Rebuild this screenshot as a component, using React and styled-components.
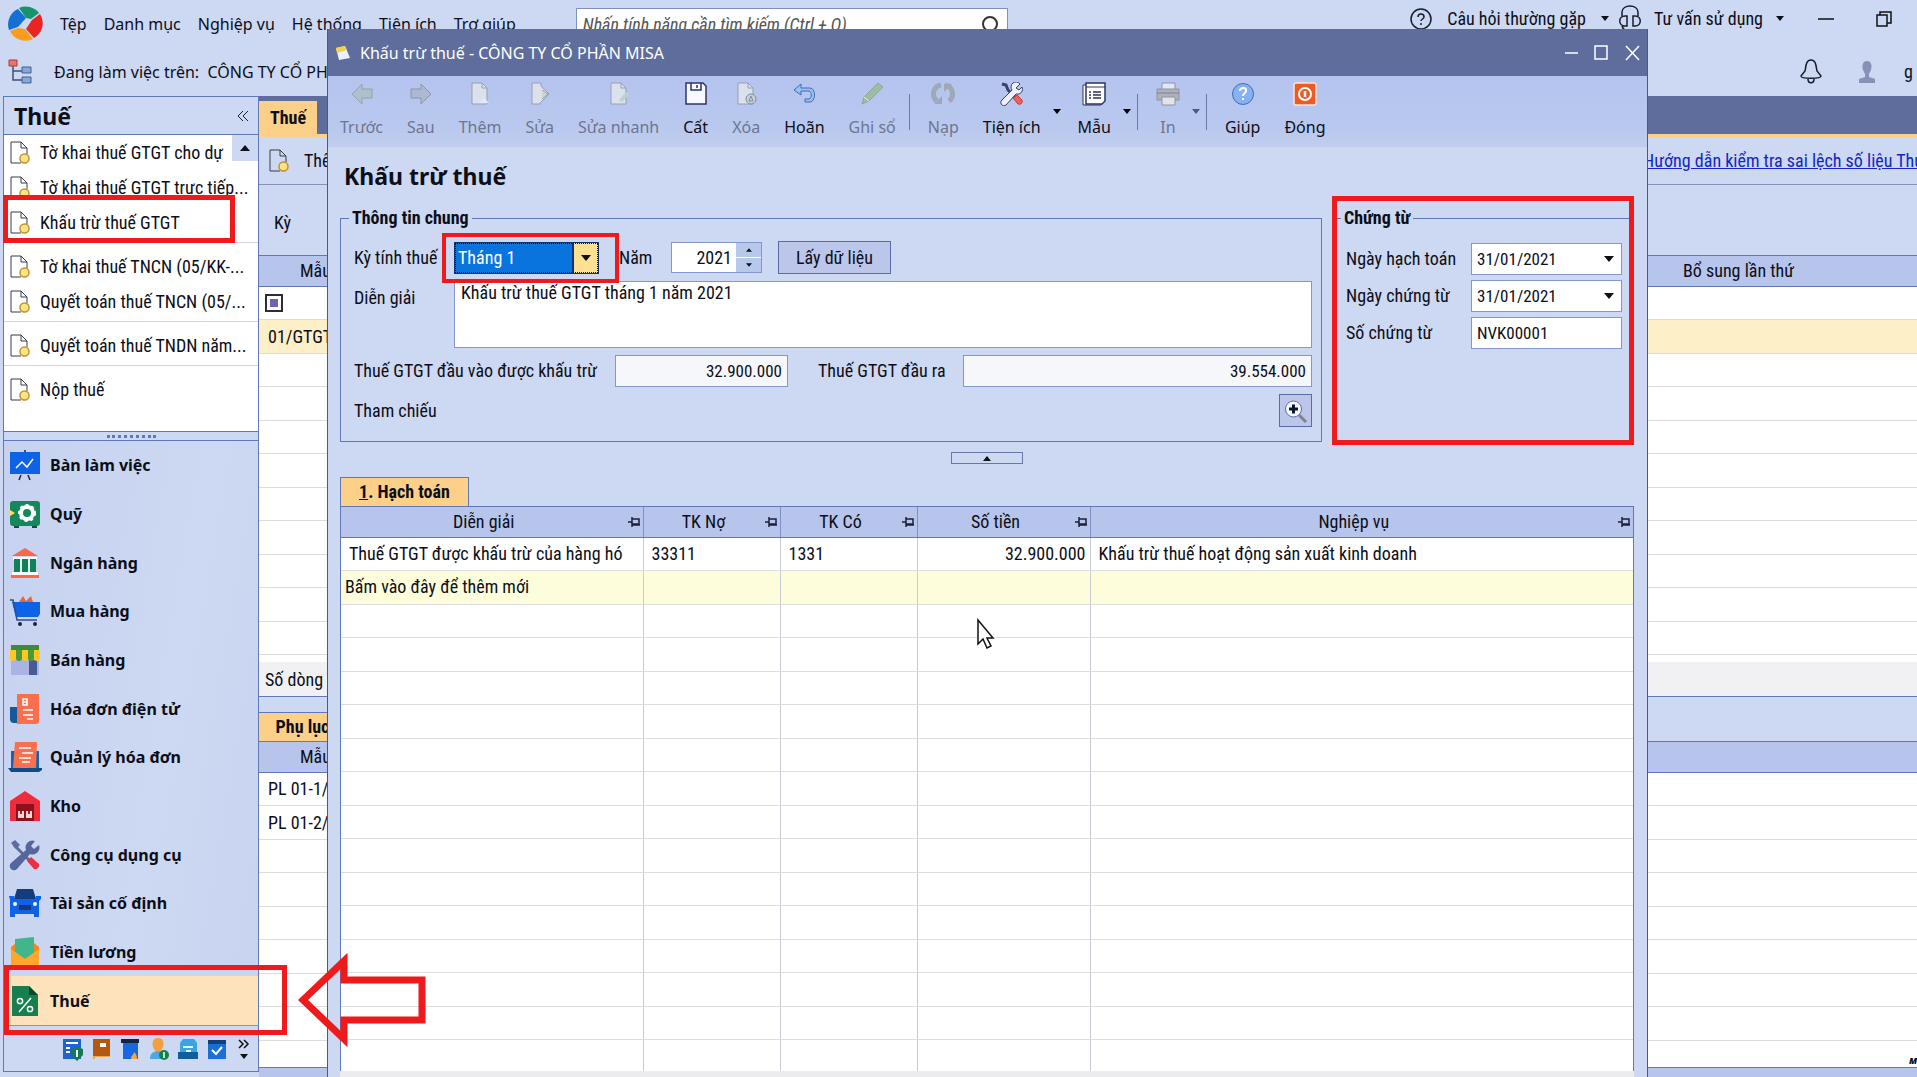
import React, { Component } from 'react';
import styled, { createGlobalStyle, css } from 'styled-components';

const ui = "'Noto Sans', 'Open Sans', sans-serif";
const narrow = "'Roboto Condensed', 'Roboto', 'Liberation Sans', sans-serif";

const pale = '#cdd8f2';
const head = '#b7c4eb';
const line = '#6178b8';
const slate = '#5e6d9b';
const red = '#ef1a1c';
const orange = '#fdd089';

const GlobalStyle = createGlobalStyle`
  * {
    box-sizing: border-box;
  }
  body {
    margin: 0;
    background: ${pale};
    color: #0c0e18;
    font: 18px/24px ${narrow};
  }
  button, input, select, textarea {
    margin: 0;
    padding: 0;
    border: 0;
    border-radius: 0;
    background: none;
    color: inherit;
    font: inherit;
  }
  svg {
    display: block;
    flex: none;
  }
`;

const Page = styled.div`
  position: relative;
  display: flex;
  flex-direction: column;
  height: 100vh;
  overflow: hidden;
`;

/* ---------- top of the main window ---------- */

const TopRow = styled.div`
  display: flex;
  align-items: flex-start;
  height: 48px;
  padding-left: 8px;
  white-space: nowrap;
`;

const Menu = styled.nav`
  display: flex;
  align-items: center;
  gap: 17px;
  height: 47px;
  font: 16px/24px ${ui};
  > button {
    white-space: nowrap;
  }
`;

const Search = styled.label`
  display: flex;
  align-items: center;
  width: 432px;
  height: 34px;
  margin: 8px 0 0 60px;
  padding: 0 8px 0 6px;
  border: 1px solid #7f8fc0;
  background: #fff;
  input {
    flex: 1;
    min-width: 0;
    outline: 0;
    font: italic 18px/24px ${narrow};
  }
  input::placeholder {
    color: #555;
    opacity: 1;
  }
`;

const TopRight = styled.div`
  display: flex;
  align-items: center;
  height: 37px;
  margin-left: auto;
  padding-right: 25px;
  > button {
    display: flex;
    align-items: center;
    gap: 15px;
  }
  > button:nth-child(2) {
    gap: 13px;
    margin-left: 10px;
  }
  > button:nth-child(3) {
    margin-left: 34px;
  }
  > button:nth-child(4) {
    margin-left: 42px;
  }
`;

const Company = styled.div`
  display: flex;
  align-items: center;
  gap: 21px;
  height: 47px;
  font: 16px/24px ${ui};
`;

const Account = styled.div`
  display: flex;
  align-items: center;
  gap: 28px;
  height: 47px;
  margin-left: auto;
  padding-right: 4px;
  > button {
    margin-right: 8px;
  }
`;

const Work = styled.div`
  display: flex;
  flex: 1;
  min-height: 0;
`;

/* ---------- left panel ---------- */

const Side = styled.aside`
  position: relative;
  z-index: 3;
  display: flex;
  flex-direction: column;
  flex: none;
  width: 256px;
  margin: 0 0 5px 3px;
  border: 1px solid ${line};
`;

const SideTitle = styled.div`
  display: flex;
  align-items: center;
  justify-content: space-between;
  height: 38px;
  padding: 0 9px 0 10px;
  border-bottom: 1px solid ${line};
  h2 {
    margin: 0;
    font: 700 23px/30px ${ui};
  }
`;

const ReportList = styled.div`
  position: relative;
  padding-bottom: 16px;
  background: #fff;
`;

const ScrollUp = styled.button`
  position: absolute;
  top: 0;
  right: 0;
  display: flex;
  align-items: center;
  justify-content: center;
  width: 26px;
  height: 26px;
  background: ${pale};
`;

const ReportGroup = styled.div`
  margin-bottom: 6px;
  padding-bottom: 2px;
  border-bottom: 1px solid #d2d4de;
  &:last-of-type {
    border: 0;
  }
`;

const ReportItem = styled.a`
  position: relative;
  display: flex;
  align-items: center;
  gap: 10px;
  height: 35px;
  padding-left: 6px;
  color: inherit;
  text-decoration: none;
  white-space: nowrap;
`;

/* red frame laid over whatever holds it */
const Frame = styled.span`
  position: absolute;
  z-index: 4;
  inset: ${p => p.$inset};
  border: ${p => p.$width || 5}px solid ${red};
  pointer-events: none;
`;

const Grip = styled.div`
  display: flex;
  align-items: center;
  justify-content: center;
  height: 10px;
  border: solid ${line};
  border-width: 1px 0;
  &::after {
    content: '';
    width: 49px;
    border-top: 3px dotted ${line};
  }
`;

const Modules = styled.nav`
  display: flex;
  flex-direction: column;
  flex: 1;
  background: linear-gradient(100deg, #c6d2f0, ${pale} 60%, #c8d4f0);
`;

const Module = styled.a`
  position: relative;
  display: flex;
  align-items: center;
  flex: 1;
  gap: 10px;
  padding-left: 6px;
  color: inherit;
  font: 700 16px/24px ${ui};
  text-decoration: none;
  ${p => p.$active && css`
    background: #fee2bc;
    border-bottom: 1px solid #8a93b5;
  `}
`;

const Shortcuts = styled.div`
  display: flex;
  align-items: center;
  justify-content: flex-end;
  gap: 9px;
  height: 45px;
  padding: 0 8px 0 0;
`;

/* ---------- list behind the dialog ---------- */

const Main = styled.main`
  display: flex;
  flex-direction: column;
  flex: 1;
  min-width: 0;
  padding-bottom: 9px;
  background: ${head};
`;

const Tabs = styled.div`
  display: flex;
  align-items: flex-end;
  height: 41px;
  background: ${slate};
  border-bottom: 3px solid ${orange};
`;

const Tab = styled.button`
  height: 33px;
  padding: 0 11px;
  background: ${orange};
  font: 700 18px/24px ${narrow};
`;

const ListTools = styled.div`
  display: flex;
  align-items: center;
  justify-content: space-between;
  height: 48px;
  padding-left: 10px;
  background: ${pale};
  border-bottom: 1px solid #8592b8;
  button {
    display: flex;
    align-items: center;
    gap: 15px;
  }
  a {
    width: 274px;
    overflow: hidden;
    color: #1226c8;
    white-space: nowrap;
  }
`;

const Period = styled.div`
  display: flex;
  align-items: center;
  height: 70px;
  padding: 6px 0 0 15px;
  background: ${pale};
`;

const Pane = styled.div`
  flex: ${p => p.$grow} 1 0;
  min-height: 0;
  overflow: hidden;
  background: #fff;
  &:last-child {
    border-bottom: 1px solid ${line};
  }
`;

const BackTable = styled.table`
  width: 100%;
  border-collapse: collapse;
  table-layout: fixed;
  th {
    height: 31px;
    padding: 0 0 0 41px;
    border: solid ${line};
    border-width: 1px 0;
    background: ${head};
    font-weight: 400;
    text-align: left;
  }
  th:last-child {
    padding-left: 37px;
  }
  td {
    height: 33px;
    padding: 0 0 0 9px;
    border-bottom: 1px solid #dcdce0;
  }
  tr:nth-child(even) td {
    height: 34px;
  }
`;

const BackRow = styled.tr`
  td {
    background: ${p => (p.$selected ? '#fdefc8' : '#fff')};
  }
`;

const Tick = styled.input`
  display: block;
  appearance: none;
  width: 18px;
  height: 18px;
  margin-left: -3px;
  border: 2px solid #2b2d3c;
  background: #6c63b5;
  box-shadow: inset 0 0 0 3px #fff;
`;

const Total = styled.div`
  height: 35px;
  padding: 6px;
  background: #f1f1f3;
  border-bottom: 1px solid ${line};
`;

const DetailTabs = styled.div`
  display: flex;
  align-items: flex-end;
  height: 44px;
  background: ${pale};
  button {
    width: 87px;
    height: 29px;
    border-top: 1px solid ${line};
    background: ${orange};
    font-weight: 700;
  }
`;

const Watermark = styled.span`
  position: absolute;
  right: 0;
  bottom: 10px;
  z-index: 3;
  width: 8px;
  height: 12px;
  overflow: hidden;
  font: italic 900 9px/12px ${ui};
`;

/* ---------- dialog ---------- */

const Dialog = styled.section`
  position: absolute;
  z-index: 2;
  top: 29px;
  right: 269px;
  bottom: 0;
  left: 327px;
  display: flex;
  flex-direction: column;
  border: solid #46588f;
  border-width: 0 1px;
  background: ${pale};
`;

const TitleBar = styled.header`
  display: flex;
  align-items: center;
  gap: 9px;
  height: 47px;
  padding: 0 6px 0 7px;
  background: ${slate};
  color: #fff;
  font: 16px/24px ${ui};
  button:first-of-type {
    margin-left: auto;
  }
  button:nth-of-type(2) {
    margin-left: 4px;
  }
  button:nth-of-type(3) {
    margin-left: 7px;
  }
`;

const Toolbar = styled.div`
  display: flex;
  height: 71px;
  background: linear-gradient(#b5c4ee, #b9c8ee 70%, #c0cdee);
`;

const Tool = styled.button`
  display: flex;
  flex-direction: column;
  align-items: center;
  gap: 9px;
  padding: 6px 12px 0;
  font: 16px/24px ${ui};
  white-space: nowrap;
  &:disabled {
    color: #6d7690;
  }
  &:disabled svg {
    opacity: 0.6;
  }
`;

const Drop = styled.button`
  display: flex;
  align-items: center;
  justify-content: center;
  width: 18px;
  margin-left: -5px;
  color: ${p => (p.disabled ? '#4f5874' : '#000')};
`;

const Rule = styled.span`
  width: 1px;
  height: 36px;
  margin: 18px 6px 0 1px;
  background: #6a7aa8;
`;

const Body = styled.div`
  display: flex;
  flex-direction: column;
  flex: 1;
  min-height: 0;
  padding: 0 13px 0 12px;
  h1 {
    margin: 0;
    height: 59px;
    padding-left: 4px;
    font: 700 23px/58px ${ui};
  }
`;

const Panels = styled.div`
  display: flex;
  gap: 11px;
`;

const Group = styled.fieldset`
  display: flex;
  flex-direction: column;
  gap: ${p => (p.$topOnly ? 5 : 7)}px;
  height: 100%;
  min-width: 0;
  margin: 0;
  padding: ${p => (p.$topOnly ? '13px 9px 14px 13px' : '11px 9px 14px 13px')};
  border: solid ${line};
  border-width: ${p => (p.$topOnly ? '1px 0 0' : '1px')};
  legend {
    margin-left: -5px;
    padding: 0 3px;
    font-weight: 700;
    line-height: 24px;
  }
`;

const General = styled.div`
  flex: 1;
  min-width: 0;
`;

const Voucher = styled.div`
  position: relative;
  width: 301px;
`;

const Field = styled.div`
  display: flex;
  align-items: ${p => (p.$top ? 'flex-start' : 'center')};
  min-height: 32px;
`;

const Label = styled.label`
  flex: none;
  width: ${p => p.$w}px;
  padding-top: ${p => (p.$top ? 5 : 0)}px;
  padding-left: ${p => p.$indent || 0}px;
`;

const inputBox = css`
  height: 32px;
  border: 1px solid #8496cc;
  background: #fff;
  font-size: 17px;
  outline: 0;
`;

const TextInput = styled.input`
  ${inputBox}
  width: ${p => (p.$w ? `${p.$w}px` : 'auto')};
  flex: ${p => (p.$w ? 'none' : 1)};
  min-width: 0;
  padding: 0 5px;
  text-align: ${p => (p.$right ? 'right' : 'left')};
  &:read-only {
    background: #f5f7fb;
  }
`;

const Note = styled.textarea`
  flex: 1;
  height: 67px;
  padding: 0 6px;
  border: 1px solid #8496cc;
  background: #fff;
  line-height: 22px;
  outline: 0;
  resize: none;
`;

/* select and its caret share one grid cell */
const Combo = styled.span`
  position: relative;
  display: grid;
  flex: none;
  width: ${p => p.$w}px;
  align-items: center;
  > select,
  > svg {
    grid-area: 1 / 1;
  }
  > svg {
    justify-self: end;
    margin-right: 8px;
    pointer-events: none;
  }
  > select {
    ${inputBox}
    width: 100%;
    padding-left: 5px;
    appearance: none;
  }
  ${p => p.$focused && css`
    > select {
      padding-left: 3px;
      border: 1px solid #16306b;
      background: linear-gradient(90deg, #0a74de 117px, #16306b 117px, #16306b 119px, #fee092 119px);
      color: #fff;
      outline: 1px dotted #111;
      outline-offset: -2px;
      font-size: 18px;
    }
  `}
`;

const Year = styled.span`
  display: flex;
  width: 91px;
  height: 31px;
  border: 1px solid #8496cc;
  background: #fff;
  input {
    flex: 1;
    min-width: 0;
    padding-right: 4px;
    text-align: right;
    outline: 0;
  }
  span {
    display: flex;
    flex-direction: column;
    gap: 1px;
    width: 25px;
  }
  button {
    display: flex;
    flex: 1;
    align-items: center;
    justify-content: center;
    background: #b7c9ea;
  }
`;

const PlainButton = styled.button`
  display: flex;
  align-items: center;
  justify-content: center;
  width: ${p => p.$w}px;
  height: 33px;
  margin-left: ${p => (p.$push ? 'auto' : '16px')};
  border: 1px solid #5b6ca4;
  background: #bbc6ea;
`;

const Collapse = styled.button`
  display: flex;
  align-items: center;
  justify-content: center;
  align-self: center;
  width: 72px;
  height: 12px;
  margin: 10px 0 13px;
  border: 1px solid #6a78a6;
`;

const GridTab = styled.button`
  align-self: flex-start;
  width: 129px;
  height: 29px;
  border: 1px solid ${line};
  border-bottom: 0;
  background: ${orange};
  font-weight: 700;
`;

const GridBox = styled.div`
  flex: 1;
  min-height: 0;
  overflow: hidden;
  border: solid ${line};
  border-width: 1px 1px 0;
  background: #fff;
`;

const Grid = styled.table`
  width: 100%;
  border-collapse: collapse;
  table-layout: fixed;
  th {
    height: 30px;
    padding: 0 2px 0 0;
    border-right: 1px solid #7f90c6;
    border-bottom: 1px solid ${line};
    background: ${head};
    font-weight: 400;
  }
  th > div {
    display: flex;
    align-items: center;
  }
  th span {
    flex: 1;
  }
  td {
    height: 33px;
    padding: 0 4px 0 8px;
    overflow: hidden;
    border-right: 1px solid #c9cad2;
    border-bottom: 1px solid #dddde2;
    white-space: nowrap;
  }
  tr:nth-child(even) td {
    height: 34px;
  }
  th:last-child,
  td:last-child {
    border-right: 0;
  }
`;

const AddRow = styled.tr`
  td {
    background: #fdfddc;
  }
  td:first-child {
    padding-left: 4px;
  }
`;

const Money = styled.td`
  text-align: right;
`;

const GridFoot = styled.div`
  height: 6px;
  background: #ececee;
`;

const Pointer = styled.svg`
  position: absolute;
  top: 589px;
  left: 648px;
`;

const BigArrow = styled.svg`
  position: absolute;
  z-index: 4;
  bottom: 29px;
  left: 298px;
`;

/* ---------- drawings ---------- */

const Svg = ({ s = 24, w, h, children, ...rest }) => (
  <svg width={w || s} height={h || s} viewBox={`0 0 ${w || s} ${h || s}`} fill="none" aria-hidden="true" {...rest}>
    {children}
  </svg>
);

const Caret = ({ up, s = 10 }) => (
  <svg width={s} height={s / 2 + 1} viewBox="0 0 10 6" aria-hidden="true">
    <path d={up ? 'M0 6 5 0l5 6z' : 'M0 0h10L5 6z'} fill="currentColor" />
  </svg>
);

const PageIcon = () => (
  <Svg w={20} h={23}>
    <path d="M1 1h10l6 6v6M1 1v21h10M11 1v6h6" stroke="#3b3d46" />
    <circle cx="14.5" cy="17.5" r="4.5" fill="#ffe584" stroke="#c1902f" strokeWidth="1.5" />
  </Svg>
);

const Logo = () => (
  <Svg s={35}>
    <path d="M1 24A17 17 0 0 1 10 3l8 9-8 9z" fill="#1570d3" />
    <path d="M11 2a17 17 0 0 1 20 5l-8 6-5-1z" fill="#17946c" />
    <path d="M32 8a17 17 0 0 1-6 24l-8-9 6-9z" fill="#ea2420" />
    <path d="M2 25l8-3 7 1 8 10A17 17 0 0 1 2 25z" fill="#fc9c1c" />
  </Svg>
);

const OrgIcon = () => (
  <Svg s={25}>
    <path d="M5 7v14h9M5 12h9" stroke="#3d5170" strokeWidth="1.5" />
    <path d="M1 1h8v6H1z" fill="#f0706a" stroke="#a93b3b" />
    <path d="M14 8h9v6h-9zM14 18h9v6h-9z" fill="#86a8d8" stroke="#45618e" />
  </Svg>
);

const moduleIcons = {
  desk: (
    <>
      <path d="M15 0v4M11 25l-2 5M18 25l2 5" stroke="#223" strokeWidth="1.5" />
      <path d="M0 2h30v22H0z" fill="#0d62e6" />
      <path d="M6 18l6-6 5 5 6-8" stroke="#fff" strokeWidth="1.5" />
    </>
  ),
  safe: (
    <>
      <rect y="2" width="30" height="25" rx="3" fill="#14885c" />
      <path d="M4 27h5v2H4zM22 27h5v2h-5z" fill="#0b5238" />
      <circle cx="17" cy="14" r="6" stroke="#fff" strokeWidth="4" />
      <circle cx="17" cy="14" r="8" stroke="#fff" strokeWidth="2" strokeDasharray="3 3" />
      <path d="M0 11l5 3-5 3z" fill="#ffe14d" />
    </>
  ),
  bank: (
    <>
      <path d="M2 8 15 0l13 8z" fill="#f8694a" />
      <path d="M3 9h24v3H3zM2 24h26v3H2z" fill="#fff" />
      <path d="M4 11h22v13H4z" fill="#e4f2ec" />
      <path d="M4 11h6v13H4zM12 11h6v13h-6zM20 11h6v13h-6z" fill="#12805a" />
      <path d="M1 27h28v3H1z" fill="#f8694a" />
    </>
  ),
  cart: (
    <>
      <path d="M9 6l4-6 3 5 5-5 2 6z" fill="#e8663f" />
      <path d="M2 6h28v12l-2 3H6z" fill="#0d63e8" />
      <path d="M0 4h3l4 20h20" stroke="#2a4f95" strokeWidth="1.5" />
      <circle cx="10" cy="28" r="2" fill="#223" />
      <circle cx="25" cy="28" r="2" fill="#223" />
    </>
  ),
  shop: (
    <>
      <path d="M1 0h28v6H1z" fill="#3f8a35" />
      <path d="M1 12h28v18H1z" fill="#a9b4e2" />
      <path d="M19 15h8v15h-8z" fill="#475a96" />
      <path d="M0 5h6v8a3 3 0 0 1-6 0zM12 5h6v8a3 3 0 0 1-6 0zM24 5h6v8a3 3 0 0 1-6 0z" fill="#ffc81e" />
      <path d="M6 5h6v8a3 3 0 0 1-6 0zM18 5h6v8a3 3 0 0 1-6 0z" fill="#4b9739" />
    </>
  ),
  invoice: (
    <>
      <path d="M0 13h10v16H4a4 4 0 0 1-4-4z" fill="#145a9a" />
      <path d="M7 0h22v27a3 3 0 0 1-3 3H7z" fill="#fb6f4e" />
      <path d="M13 5h4v6h-4zM13 8h4M13 16h10M13 21h10M17 25h6" stroke="#fff" strokeWidth="1.5" />
    </>
  ),
  invoices: (
    <>
      <path d="M1 9h28v17H1z" fill="#1763ac" />
      <path d="M-2 26h34v2l-3 2H1z" fill="#104b86" />
      <path d="M5 0h22l-1 26H3z" fill="#fb6f4e" />
      <path d="M9 6h12M12 11h11M9 16h12M12 20h8" stroke="#fff" strokeWidth="1.5" />
    </>
  ),
  store: (
    <>
      <path d="M0 10 15 0l15 10v20H0z" fill="#ee2d3c" />
      <path d="M6 13h18v17H6z" fill="#8d1220" />
      <path d="M8 20h6v7H8zM16 20h6v7h-6z" fill="#f7d5d5" />
      <path d="M11 20v3M19 20v3" stroke="#b01c2c" strokeWidth="2" />
    </>
  ),
  tools: (
    <>
      <path d="M4 5l20 20" stroke="#5d6b9f" strokeWidth="3" />
      <path d="M1 3l4-3 5 5-4 4z" fill="#5d6b9f" />
      <path d="M17 21l4-4 8 7a4 4 0 0 1-5 5z" fill="#ea3042" />
      <path d="M25 1a7 7 0 0 0-9 9L1 23a4 4 0 0 0 6 6l13-15a7 7 0 0 0 9-9l-5 4-3-3z" fill="#56659c" />
    </>
  ),
  car: (
    <>
      <path d="M4 11 7 1h16l3 10z" fill="#143b7c" />
      <path d="M-1 8h5l1 3h20l1-3h5v3l-2 2v16h-5v-3H5v3H0V12z" fill="#0d62e6" />
      <circle cx="5" cy="16" r="2" fill="#fff" />
      <circle cx="25" cy="16" r="2" fill="#fff" />
      <path d="M9 17h12v5H9z" fill="#143b7c" />
    </>
  ),
  pay: (
    <>
      <path d="M1 10l5-4h18l5 4v20H1z" fill="#f28a1c" />
      <path d="M5 2l19-2v17l-9 5-10-6z" fill="#41b68a" />
      <path d="M1 12l14 10 14-10v18H1z" fill="#ffa62b" />
    </>
  ),
  tax: (
    <>
      <path d="M2 0h17l9 9v21H2z" fill="#15804e" />
      <path d="M19 0l9 9h-9z" fill="#0a4a2b" />
      <path d="M21 12 9 26" stroke="#fff" strokeWidth="1.5" />
      <circle cx="10" cy="15" r="2.6" stroke="#fff" strokeWidth="1.5" />
      <circle cx="20" cy="23" r="2.6" stroke="#fff" strokeWidth="1.5" />
    </>
  )
};

const shortcutIcons = {
  'Sổ tổng hợp': (
    <>
      <path d="M1 0h18v20H1z" fill="#1c63d4" />
      <path d="M4 4h12M4 9h4M4 13h4" stroke="#fff" strokeWidth="2" />
      <path d="M9 10l6-2 6 2v6l-6 6-6-6z" fill="#157a52" />
      <path d="M15 11v7" stroke="#fff" strokeWidth="2" />
    </>
  ),
  'Sổ cái': (
    <>
      <path d="M2 0h17v17H2z" fill="#b5580f" />
      <path d="M9 4h6v4H9z" fill="#fff" />
      <path d="M2 17h17v1H4v2H2z" fill="#f0a84b" />
    </>
  ),
  'Ngân sách': (
    <>
      <path d="M1 0h18v4H1z" fill="#14233f" />
      <path d="M3 4h15v16H3z" fill="#1667e0" />
      <path d="M11 20c0-4 3-4 3-7 3 3 3 5 3 7z" fill="#f7a33a" />
    </>
  ),
  'Nhân viên': (
    <>
      <path d="M1 20c0-6 4-8 8-8s7 2 8 8z" fill="#4da7e0" />
      <path d="M9-1c6 0 6 6 5 9-2 6-8 6-10 0-1-3-1-9 5-9z" fill="#f2a040" />
      <circle cx="15" cy="16" r="5" fill="#15804e" />
      <path d="M15 13v6" stroke="#fff" strokeWidth="1.5" />
    </>
  ),
  'Kho lưu trữ': (
    <>
      <path d="M2 4l3-4h11l3 4v10H2z" fill="#3aa3e4" />
      <path d="M0 13h20v7H0z" fill="#0e5e9e" />
      <path d="M5 8h10M8 12h5" stroke="#dff" strokeWidth="2" />
    </>
  ),
  'Lịch': (
    <>
      <path d="M1 1h18v19H1z" fill="#1a6fd6" />
      <path d="M1 1h18v4H1z" fill="#123f78" />
      <path d="M5 11l4 4 6-7" stroke="#fff" strokeWidth="2" />
    </>
  )
};

const sheet = (
  <>
    <path d="M4 1h10l5 5v16H4z" fill="#f5f4ec" stroke="#83868f" />
    <path d="M14 1v5h5" stroke="#83868f" />
  </>
);

const toolIcons = {
  back: <path d="M2 12 12 2v5h10v9H12v6z" fill="#a9bdb3" stroke="#7d8a88" />,
  next: <path d="M22 12 12 2v5H2v9h10v6z" fill="#a9b1bd" stroke="#6f7683" />,
  add: <>{sheet}<path d="M11 21l5-5 5 5z" fill="#fff" /></>,
  edit: <><path d="M4 1h9v3l8 8-9 9v1H4z" fill="#f5f4ec" stroke="#83868f" /><path d="M14 8l6 4-6 5" fill="#eadfb8" stroke="#83868f" /></>,
  quick: <>{sheet}<path d="M12 18l7-8 3 3-7 7z" fill="#c8d8b8" /></>,
  save: <><path d="M2 1h17l3 3v18H2z" fill="#f8f9ff" stroke="#2c3468" strokeWidth="1.5" /><path d="M7 1v7h10V1M13 3v3" stroke="#2c3468" strokeWidth="1.5" /></>,
  del: <>{sheet}<circle cx="17" cy="17" r="5" fill="#d5d8d0" stroke="#60656a" /><path d="M17 14l-2 5h4z" stroke="#60656a" /></>,
  undo: <path d="M9 2 2 8l7 5v-4h8c3 0 3 8 0 8h-4v3h5c6 0 6-14 0-14H9z" fill="#9dc0f2" stroke="#3a6cb4" />,
  post: <><path d="M2 22l2-7L18 1l5 4L9 19z" fill="#8db872" stroke="#79906e" /><path d="M4 15l5 4" stroke="#fff" /></>,
  load: (
    <>
      <path d="M10 3a9 9 0 0 0-4 16M14 3a9 9 0 0 1 4 16" stroke="#8f9694" strokeWidth="5" />
      <path d="M3 22h8v-8zM21 2h-8v8z" fill="#8f9694" />
    </>
  ),
  tools: (
    <>
      <path d="M2 2l4 1 2 5 12 12" stroke="#39406a" strokeWidth="3" />
      <path d="M13 16l4-3 5 5a3 3 0 0 1-4 4z" fill="#f0605a" stroke="#c0403c" />
      <path d="M20 2a5 5 0 0 0-8 6L2 18a3 3 0 0 0 4 5l10-11a5 5 0 0 0 6-7l-3 3-3-2z" fill="#edf0fd" stroke="#39406a" />
    </>
  ),
  form: <><path d="M1 3h18v20H1z" fill="#fff" stroke="#2d3560" /><path d="M4 1h19v18l-3 3H4z" fill="#fff" stroke="#2d3560" strokeWidth="1.5" /><path d="M4 5h19" stroke="#2d3560" /><path d="M7 10h2M11 10h8M7 13h2M11 13h8M7 16h2M11 16h8" stroke="#2d3560" strokeWidth="1.5" /></>,
  print: <><path d="M6 1h13v7H6z" fill="#fff" stroke="#777" /><path d="M1 7h22v11H1z" fill="#a8a49c" stroke="#77746e" /><path d="M1 11h22" stroke="#5c5a55" /><path d="M6 15h13v8H6z" fill="#fff8e6" stroke="#777" /></>,
  help: <><circle cx="12" cy="12" r="10.5" fill="#86b1f2" stroke="#3f6db8" /><path d="M9 9c0-4 7-4 6 0 0 2-3 2-3 5M12 16v2" stroke="#fff" strokeWidth="2" /></>,
  close: <><rect x="1" y="1" width="22" height="22" rx="2" fill="#ee5a24" stroke="#fbe3d6" strokeWidth="1.5" /><circle cx="12" cy="12" r="6" stroke="#fff" strokeWidth="2" /><path d="M12 9v6" stroke="#fff" strokeWidth="2.5" /></>
};

const Pin = () => (
  <Svg w={14} h={12}>
    <path d="M1 6h4M5 1v10M5 3h7v5H5M5 9h8" stroke="#1b2038" strokeWidth="1.5" />
  </Svg>
);

/* ---------- data ---------- */

const reports = [
  ['Tờ khai thuế GTGT cho dự', 'Tờ khai thuế GTGT trực tiếp...', 'Khấu trừ thuế GTGT'],
  ['Tờ khai thuế TNCN (05/KK-...', 'Quyết toán thuế TNCN (05/...'],
  ['Quyết toán thuế TNDN năm...'],
  ['Nộp thuế']
];

const modules = [
  ['desk', 'Bàn làm việc'],
  ['safe', 'Quỹ'],
  ['bank', 'Ngân hàng'],
  ['cart', 'Mua hàng'],
  ['shop', 'Bán hàng'],
  ['invoice', 'Hóa đơn điện tử'],
  ['invoices', 'Quản lý hóa đơn'],
  ['store', 'Kho'],
  ['tools', 'Công cụ dụng cụ'],
  ['car', 'Tài sản cố định'],
  ['pay', 'Tiền lương'],
  ['tax', 'Thuế']
];

const tools = [
  ['back', 'Trước', true],
  ['next', 'Sau', true],
  ['add', 'Thêm', true],
  ['edit', 'Sửa', true],
  ['quick', 'Sửa nhanh', true],
  ['save', 'Cất'],
  ['del', 'Xóa', true],
  ['undo', 'Hoãn'],
  ['post', 'Ghi sổ', true],
  '|',
  ['load', 'Nạp', true],
  ['tools', 'Tiện ích', false, true],
  ['form', 'Mẫu', false, true],
  '|',
  ['print', 'In', true, true],
  '|',
  ['help', 'Giúp'],
  ['close', 'Đóng']
];

const columns = ['Diễn giải', 'TK Nợ', 'TK Có', 'Số tiền', 'Nghiệp vụ'];
const widths = [302, 137, 137, 173];

const blankRows = (count, cells) =>
  Array.from({ length: count }, (_, r) => (
    <tr key={r}>{Array.from({ length: cells }, (_, c) => <td key={c} />)}</tr>
  ));

function Sidebar() {
  return (
    <Side>
      <SideTitle>
        <h2>Thuế</h2>
        <button aria-label="Thu gọn">
          <Svg s={12}><path d="M6 1 1 6l5 5M11 1 6 6l5 5" stroke="#222" /></Svg>
        </button>
      </SideTitle>
      <ReportList>
        {reports.map(group => (
          <ReportGroup key={group[0]}>
            {group.map(name => (
              <ReportItem href="#" key={name}>
                <PageIcon />
                {name}
                {name === 'Khấu trừ thuế GTGT' && <Frame $inset="-10px 23px -3px -1px" />}
              </ReportItem>
            ))}
          </ReportGroup>
        ))}
        <ScrollUp aria-label="Cuộn lên"><Caret up /></ScrollUp>
      </ReportList>
      <Grip />
      <Modules>
        {modules.map(([icon, name]) => (
          <Module href="#" key={icon} $active={icon === 'tax'}>
            <Svg s={30} overflow="visible">{moduleIcons[icon]}</Svg>
            {name}
            {icon === 'tax' && <Frame $inset="-11px -29px -10px 0" />}
          </Module>
        ))}
      </Modules>
      <Shortcuts>
        {Object.keys(shortcutIcons).map(name => (
          <button key={name} aria-label={name}>
            <Svg s={20} overflow="visible">{shortcutIcons[name]}</Svg>
          </button>
        ))}
        <button aria-label="Thêm nữa">
          <Svg w={14} h={22}>
            <path d="M3 2l4 4-4 4M8 2l4 4-4 4" stroke="#111" strokeWidth="1.5" />
            <path d="M4 16h8l-4 5z" fill="#111" />
          </Svg>
        </button>
      </Shortcuts>
    </Side>
  );
}

function TaxList() {
  const cols = (
    <colgroup>
      <col width="160" />
      <col />
      <col width="271" />
    </colgroup>
  );
  return (
    <Main>
      <Tabs><Tab>Thuế</Tab></Tabs>
      <ListTools>
        <button><PageIcon />Thêm</button>
        <a href="#">Hướng dẫn kiểm tra sai lệch số liệu Thuế</a>
      </ListTools>
      <Period>Kỳ</Period>
      <Pane $grow={5}>
        <BackTable>
          {cols}
          <thead><tr><th>Mẫu</th><th /><th>Bổ sung lần thứ</th></tr></thead>
          <tbody>
            <BackRow><td><Tick type="checkbox" aria-label="Lọc" /></td><td /><td /></BackRow>
            <BackRow $selected><td>01/GTGT</td><td /><td /></BackRow>
            {blankRows(10, 3)}
          </tbody>
        </BackTable>
      </Pane>
      <Total>Số dòng</Total>
      <DetailTabs><button>Phụ lục</button></DetailTabs>
      <Pane $grow={4}>
        <BackTable>
          {cols}
          <thead><tr><th>Mẫu</th><th /><th /></tr></thead>
          <tbody>
            <BackRow><td>PL 01-1/</td><td /><td /></BackRow>
            <BackRow><td>PL 01-2/</td><td /><td /></BackRow>
            {blankRows(8, 3)}
          </tbody>
        </BackTable>
      </Pane>
    </Main>
  );
}

function DeductionForm() {
  return (
    <Panels>
      <General>
        <Group>
          <legend>Thông tin chung</legend>
          <Field>
            <Label htmlFor="period" $w={100}>Kỳ tính thuế</Label>
            <Combo $w={145} $focused>
              <select id="period"><option>Tháng 1</option></select>
              <Caret />
              <Frame $inset="-9px -20px -9px -12px" $width={4} />
            </Combo>
            <Label htmlFor="year" $w={72} $indent={20}>Năm</Label>
            <Year>
              <input id="year" defaultValue="2021" />
              <span>
                <button aria-label="Tăng"><Caret up s={6} /></button>
                <button aria-label="Giảm"><Caret s={6} /></button>
              </span>
            </Year>
            <PlainButton $w={113}>Lấy dữ liệu</PlainButton>
          </Field>
          <Field $top>
            <Label htmlFor="note" $w={100} $top>Diễn giải</Label>
            <Note id="note" defaultValue="Khấu trừ thuế GTGT tháng 1 năm 2021" />
          </Field>
          <Field>
            <Label htmlFor="input-tax" $w={261}>Thuế GTGT đầu vào được khấu trừ</Label>
            <TextInput id="input-tax" $w={173} $right readOnly value="32.900.000" />
            <Label htmlFor="output-tax" $w={175} $indent={30}>Thuế GTGT đầu ra</Label>
            <TextInput id="output-tax" $right readOnly value="39.554.000" />
          </Field>
          <Field>
            Tham chiếu
            <PlainButton $w={33} $push aria-label="Tìm chứng từ tham chiếu">
              <Svg s={24}>
                <path d="M15 16l7 7" stroke="#7d8494" strokeWidth="3" />
                <circle cx="9.5" cy="10" r="8" fill="#f4f8ff" stroke="#5f6f94" />
                <path d="M9.5 5.5v9M5 10h9" stroke="#0d1430" strokeWidth="3" />
              </Svg>
            </PlainButton>
          </Field>
        </Group>
      </General>
      <Voucher>
        <Group $topOnly>
          <legend>Chứng từ</legend>
          <Field>
            <Label htmlFor="posted" $w={125}>Ngày hạch toán</Label>
            <Combo $w={151}>
              <select id="posted"><option>31/01/2021</option></select>
              <Caret />
            </Combo>
          </Field>
          <Field>
            <Label htmlFor="dated" $w={125}>Ngày chứng từ</Label>
            <Combo $w={151}>
              <select id="dated"><option>31/01/2021</option></select>
              <Caret />
            </Combo>
          </Field>
          <Field>
            <Label htmlFor="number" $w={125}>Số chứng từ</Label>
            <TextInput id="number" $w={151} defaultValue="NVK00001" />
          </Field>
        </Group>
        <Frame $inset="-10px 0 -3px -1px" />
      </Voucher>
    </Panels>
  );
}

function DeductionDialog() {
  return (
    <Dialog>
      <TitleBar>
        <Svg s={16}>
          <path d="M1 3l9-2 5 12-11 2z" fill="#e9f1ff" />
          <path d="M1 3l9-2 2 4-10 3z" fill="#f2d24a" />
        </Svg>
        Khấu trừ thuế - CÔNG TY CỔ PHẦN MISA
        <button aria-label="Thu nhỏ"><Svg s={16}><path d="M1 8h13" stroke="#fff" strokeWidth="1.5" /></Svg></button>
        <button aria-label="Phóng to"><Svg s={16}><path d="M2 1h12v13H2z" stroke="#fff" strokeWidth="1.5" /></Svg></button>
        <button aria-label="Đóng"><Svg s={16}><path d="M1 1l13 14M14 1 1 15" stroke="#fff" strokeWidth="1.5" /></Svg></button>
      </TitleBar>
      <Toolbar>
        {tools.map((tool, i) => {
          if (tool === '|') return <Rule key={i} />;
          const [icon, name, disabled, drop] = tool;
          return (
            <React.Fragment key={icon}>
              <Tool disabled={disabled}>
                <Svg s={24}>{toolIcons[icon]}</Svg>
                {name}
              </Tool>
              {drop && <Drop disabled={disabled} aria-label={`${name}, tùy chọn`}><Caret s={8} /></Drop>}
            </React.Fragment>
          );
        })}
      </Toolbar>
      <Body>
        <h1>Khấu trừ thuế</h1>
        <DeductionForm />
        <Collapse aria-label="Ẩn thông tin chung"><Caret up s={8} /></Collapse>
        <GridTab><u>1</u>. Hạch toán</GridTab>
        <GridBox>
          <Grid>
            <colgroup>{columns.map((c, i) => <col key={c} width={widths[i]} />)}</colgroup>
            <thead>
              <tr>{columns.map(c => <th key={c}><div><span>{c}</span><Pin /></div></th>)}</tr>
            </thead>
            <tbody>
              <tr>
                <td>Thuế GTGT được khấu trừ của hàng hó</td>
                <td>33311</td>
                <td>1331</td>
                <Money>32.900.000</Money>
                <td>Khấu trừ thuế hoạt động sản xuất kinh doanh</td>
              </tr>
              <AddRow><td>Bấm vào đây để thêm mới</td><td /><td /><td /><td /></AddRow>
              {blankRows(14, 5)}
            </tbody>
          </Grid>
        </GridBox>
        <GridFoot />
      </Body>
      <Pointer width="20" height="34" viewBox="0 0 20 34">
        <path d="M2 2v24l5-5 4 9 4-2-4-8h6z" fill="#fff" stroke="#111" strokeWidth="1.5" />
      </Pointer>
    </Dialog>
  );
}

export default class App extends Component {
  render() {
    return (
      <Page>
        <GlobalStyle />
        <TopRow>
          <Menu>
            <Logo />
            {['Tệp', 'Danh mục', 'Nghiệp vụ', 'Hệ thống', 'Tiện ích', 'Trợ giúp'].map(name => (
              <button key={name}>{name}</button>
            ))}
          </Menu>
          <Search>
            <input placeholder="Nhấn tính năng cần tìm kiếm (Ctrl + Q)" aria-label="Tìm kiếm" />
            <Svg s={18}>
              <circle cx="9" cy="8" r="7" stroke="#333" strokeWidth="2" />
            </Svg>
          </Search>
          <TopRight>
            <button>
              <Svg s={22}>
                <circle cx="11" cy="11" r="10" stroke="#181c2c" strokeWidth="1.5" />
                <path d="M8 9c0-4 6-4 6 0 0 2-3 2-3 4M11 15v2" stroke="#181c2c" strokeWidth="1.5" />
              </Svg>
              Câu hỏi thường gặp <Caret s={8} />
            </button>
            <button>
              <Svg w={22} h={28}>
                <path d="M3 11V7c0-8 16-8 16 0v4M8 11v10H6c-7 0-7-10 0-10zM14 11v10h2c7 0 7-10 0-10zM3 20c0 5 4 6 9 6" stroke="#181c2c" strokeWidth="1.5" />
              </Svg>
              Tư vấn sử dụng <Caret s={8} />
            </button>
            <button aria-label="Thu nhỏ"><Svg s={16}><path d="M0 8h16" stroke="#111" strokeWidth="1.5" /></Svg></button>
            <button aria-label="Khôi phục">
              <Svg s={16}><path d="M1 4h10v11H1zM4 4V1h11v11h-4" stroke="#111" strokeWidth="1.5" /></Svg>
            </button>
          </TopRight>
        </TopRow>
        <TopRow>
          <Company>
            <OrgIcon />
            <span>Đang làm việc trên:&nbsp; CÔNG TY CỔ PHẦN MISA</span>
          </Company>
          <Account>
            <button aria-label="Thông báo">
              <Svg w={22} h={26}>
                <path d="M11 1c-5 0-5 6-6 11l-4 5c0 3 20 3 20 0l-4-5c-1-5-1-11-6-11zM8 20c0 5 6 5 6 0" stroke="#181c2c" strokeWidth="1.5" />
              </Svg>
            </button>
            <Svg w={18} h={22}>
              <path d="M9 0c5 0 5 6 4 9l-2 4v3l6 2v4H1v-4l6-2v-3L5 9C4 6 4 0 9 0z" fill="#8691b8" />
            </Svg>
            <span>g</span>
          </Account>
        </TopRow>
        <Work>
          <Sidebar />
          <TaxList />
        </Work>
        <DeductionDialog />
        <BigArrow width="130" height="96" viewBox="0 0 130 96">
          <path d="M5 48 46 9v19h78v40H46v19z" fill="none" stroke={red} strokeWidth="7" />
        </BigArrow>
        <Watermark>M</Watermark>
      </Page>
    );
  }
}
